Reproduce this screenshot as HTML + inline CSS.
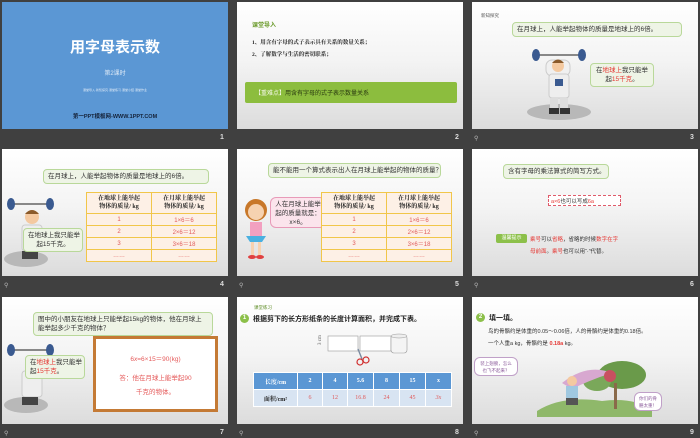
<!DOCTYPE html>
<html><head><meta charset="utf-8"><style>
*{margin:0;padding:0;box-sizing:border-box}
body{width:700px;height:438px;background:#404040;position:relative;overflow:hidden;font-family:"Liberation Sans","Noto Sans CJK SC",sans-serif}
.s{position:absolute;width:226px;height:127px;background:linear-gradient(#fff 0%,#f4f4f4 45%,#dcdcdc 100%);overflow:hidden}
.a{position:absolute}
.num{position:absolute;color:#ddd;font-size:7px;font-weight:bold}
.ic{position:absolute;color:#bbb;font-size:6px}
.bub{position:absolute;background:#eef4e6;border:1px solid #b9d89a;border-radius:4px;font-size:6.5px;color:#333;padding:2px 4px;line-height:9px;white-space:nowrap}
table{position:absolute;border-collapse:collapse;font-size:6px}
.t1 td{border:1px solid #f1c64a;background:#fdf0e6;text-align:center;color:#e05a5a;height:12px}
.t1 .h td{height:21px;color:#222;font-family:"Liberation Serif","Noto Serif CJK SC",serif;font-weight:bold;line-height:8px;font-size:6px}
.t2{table-layout:fixed}
.t2 td{border:1px solid #fff;text-align:center;height:17px;padding:0}
.red{color:#e53935}
</style></head><body>

<!-- slide 1 -->
<div class="s" style="left:2px;top:2px;background:#5b97d4">
<div class="a" style="left:0;width:226px;top:34px;text-align:center;color:#fff;font-size:15px;font-weight:bold">用字母表示数</div>
<div class="a" style="left:0;width:226px;top:66px;text-align:center;color:#dbe8f6;font-size:6px">第2课时</div>
<div class="a" style="left:0;width:226px;top:86px;text-align:center;color:#dbe8f6;font-size:3px">课堂导入·新知探究·课堂练习·课堂小结·课堂作业</div>
<div class="a" style="left:0;width:226px;top:110px;text-align:center;color:#15233a;font-size:5.5px;font-weight:bold">第一PPT模板网-WWW.1PPT.COM</div>
</div>
<div class="num" style="left:220px;top:134px">1</div>

<!-- slide 2 -->
<div class="s" style="left:237px;top:2px">
<div class="a" style="left:15px;top:18px;font-size:6px;color:#6a9a2a;font-weight:bold">课堂导入</div>
<div class="a" style="left:15px;top:36px;font-size:5.5px;color:#222;font-weight:bold;font-family:'Liberation Serif','Noto Serif CJK SC',serif">1、用含有字母的式子表示具有关系的数量关系；</div>
<div class="a" style="left:15px;top:48px;font-size:5.5px;color:#222;font-weight:bold;font-family:'Liberation Serif','Noto Serif CJK SC',serif">2、了解数学与生活的密切联系；</div>
<div class="a" style="left:8px;top:80px;width:212px;height:21px;background:#8cbd3e;border-radius:2px;font-size:6px;color:#2a3a10;padding:6px 10px"><span style="color:#f4f8e8">【重难点】</span>用含有字母的式子表示数量关系</div>
</div>
<div class="num" style="left:455px;top:134px">2</div>

<!-- slide 3 -->
<div class="s" style="left:472px;top:2px">
<div class="a" style="left:9px;top:11px;font-size:4.5px;color:#555">新知探究</div>
<div class="bub" style="left:40px;top:20px;width:170px">在月球上，人能举起物体的质量是地球上的6倍。</div>
<svg class="a" style="left:52px;top:44px" width="70" height="76">
<ellipse cx="35" cy="66" rx="32" ry="8" fill="#b8b8b8"/>
<rect x="12" y="8" width="46" height="2" fill="#888"/>
<ellipse cx="12" cy="9" rx="4" ry="6" fill="#3a5a90"/><ellipse cx="58" cy="9" rx="4" ry="6" fill="#3a5a90"/>
<rect x="22" y="14" width="24" height="16" rx="6" fill="#f0f0f0" stroke="#ccc"/>
<circle cx="34" cy="20" r="6" fill="#f4c9a0"/><path d="M28 17 Q34 10 40 17" fill="#8a5a2a"/>
<rect x="25" y="28" width="20" height="24" rx="3" fill="#eee" stroke="#ccc"/>
<rect x="31" y="33" width="8" height="7" fill="#3a5a90"/>
<rect x="26" y="52" width="8" height="12" fill="#ddd"/><rect x="36" y="52" width="8" height="12" fill="#ddd"/>
<rect x="25" y="62" width="10" height="6" fill="#333"/><rect x="36" y="62" width="10" height="6" fill="#333"/>
</svg>
<div class="bub" style="left:118px;top:61px;width:64px;text-align:center">在<span class="red">地球上</span>我只能举<br>起<span class="red">15千克</span>。</div>
</div>
<div class="ic" style="left:474px;top:135px">⚲</div>
<div class="num" style="left:690px;top:134px">3</div>

<!-- slide 4 -->
<div class="s" style="left:2px;top:149px">
<div class="bub" style="left:41px;top:20px;width:166px">在月球上，人能举起物体的质量是地球上的6倍。</div>
<svg class="a" style="left:2px;top:42px" width="52" height="80">
<ellipse cx="22" cy="68" rx="22" ry="8" fill="#b8b8b8"/>
<rect x="6" y="12" width="40" height="2" fill="#888"/>
<ellipse cx="7" cy="13" rx="4" ry="6" fill="#3a5a90"/><ellipse cx="46" cy="13" rx="4" ry="6" fill="#3a5a90"/>
<circle cx="28" cy="26" r="7" fill="#f4c9a0"/><path d="M21 23 Q28 15 35 23" fill="#8a5a2a"/>
<rect x="18" y="34" width="20" height="26" rx="3" fill="#eee" stroke="#ccc"/>
<rect x="18" y="60" width="16" height="8" fill="#444"/>
</svg>
<div class="bub" style="left:21px;top:79px;width:60px;text-align:center">在地球上我只能举<br>起15千克。</div>
<table class="t1" style="left:84px;top:43px;width:131px">
<tr class="h"><td>在地球上能举起<br>物体的质量/ kg</td><td>在月球上能举起<br>物体的质量/ kg</td></tr>
<tr><td>1</td><td>1×6＝6</td></tr><tr><td>2</td><td>2×6＝12</td></tr><tr><td>3</td><td>3×6＝18</td></tr><tr><td>……</td><td>……</td></tr></table>
</div>
<div class="ic" style="left:4px;top:282px">⚲</div>
<div class="num" style="left:220px;top:281px">4</div>

<!-- slide 5 -->
<div class="s" style="left:237px;top:149px">
<div class="bub" style="left:31px;top:14px;width:173px">能不能用一个算式表示出人在月球上能举起的物体的质量？</div>
<svg class="a" style="left:3px;top:47px" width="32" height="66">
<circle cx="16" cy="14" r="11" fill="#c8782a"/><circle cx="16" cy="16" r="8" fill="#f6d2b0"/>
<rect x="10" y="26" width="12" height="14" fill="#f2a0c0"/><path d="M6 40 L26 40 L22 46 L10 46Z" fill="#4ab0e0"/>
<rect x="11" y="46" width="3" height="14" fill="#f6d2b0"/><rect x="18" y="46" width="3" height="14" fill="#f6d2b0"/>
<ellipse cx="12" cy="61" rx="4" ry="2" fill="#e04040"/><ellipse cx="20" cy="61" rx="4" ry="2" fill="#e04040"/>
</svg>
<div class="bub" style="left:33px;top:48px;width:56px;height:31px;background:#fbe4ec;border-color:#e89ab8;text-align:center;border-radius:6px">人在月球上能举<br>起的质量就是：<br>x×6。</div>
<table class="t1" style="left:84px;top:43px;width:131px">
<tr class="h"><td>在地球上能举起<br>物体的质量/ kg</td><td>在月球上能举起<br>物体的质量/ kg</td></tr>
<tr><td>1</td><td>1×6＝6</td></tr><tr><td>2</td><td>2×6＝12</td></tr><tr><td>3</td><td>3×6＝18</td></tr><tr><td>……</td><td>……</td></tr></table>
</div>
<div class="ic" style="left:239px;top:282px">⚲</div>
<div class="num" style="left:455px;top:281px">5</div>

<!-- slide 6 -->
<div class="s" style="left:472px;top:149px">
<div class="bub" style="left:31px;top:15px;width:106px">含有字母的乘法算式的简写方式。</div>
<div class="a" style="left:76px;top:46px;width:73px;height:11px;border:1px dashed #e05a6a;background:#fff;font-size:5.5px;color:#333;padding:1px 2px;white-space:nowrap"><span class="red">a×6</span>也可以写成<span class="red">6a</span></div>
<div class="a" style="left:24px;top:85px;width:31px;height:9px;background:#8cc04a;border-radius:2px;font-size:5px;color:#fff;text-align:center;line-height:9px">温馨提示</div>
<div class="a" style="left:58px;top:85px;font-size:5.5px;color:#333;line-height:12px;white-space:nowrap"><span class="red">乘号</span>可以<span class="red">省略</span>，省略的时候<span class="red">数字在字</span><br><span class="red">母前面</span>。<span class="red">乘号</span>也可以用“·”代替。</div>
</div>
<div class="ic" style="left:474px;top:282px">⚲</div>
<div class="num" style="left:690px;top:281px">6</div>

<!-- slide 7 -->
<div class="s" style="left:2px;top:297px">
<div class="bub" style="left:31px;top:15px;width:180px;white-space:normal">图中的小朋友在地球上只能举起15kg的物体，他在月球上能举起多少千克的物体？</div>
<svg class="a" style="left:2px;top:40px" width="52" height="80">
<ellipse cx="22" cy="68" rx="22" ry="8" fill="#b8b8b8"/>
<rect x="6" y="12" width="40" height="2" fill="#888"/>
<ellipse cx="7" cy="13" rx="4" ry="6" fill="#3a5a90"/><ellipse cx="46" cy="13" rx="4" ry="6" fill="#3a5a90"/>
<circle cx="28" cy="26" r="7" fill="#f4c9a0"/><path d="M21 23 Q28 15 35 23" fill="#8a5a2a"/>
<rect x="18" y="34" width="20" height="26" rx="3" fill="#eee" stroke="#ccc"/>
<rect x="18" y="60" width="16" height="8" fill="#444"/>
</svg>
<div class="bub" style="left:23px;top:58px;width:60px">在<span class="red">地球上</span>我只能举<br>起<span class="red">15千克</span>。</div>
<div class="a" style="left:91px;top:39px;width:125px;height:76px;border:3px solid #c47a35;background:#fff;color:#e55a5a;font-size:6.5px;text-align:center">
<div style="margin-top:14px">6<i>x</i>=6×15＝90(kg)</div>
<div style="margin-top:9px;line-height:14px">答：他在月球上能举起90<br>千克的物体。</div></div>
</div>
<div class="ic" style="left:4px;top:430px">⚲</div>
<div class="num" style="left:220px;top:429px">7</div>

<!-- slide 8 -->
<div class="s" style="left:237px;top:297px">
<div class="a" style="left:17px;top:8px;font-size:4.5px;color:#5a8a20">课堂练习</div>
<div class="a" style="left:3px;top:17px;width:9px;height:9px;border-radius:50%;background:#8cc04a;color:#fff;font-size:6px;text-align:center;line-height:9px;font-weight:bold">1</div>
<div class="a" style="left:16px;top:17px;font-size:7px;font-weight:bold;color:#222">根据剪下的长方形纸条的长度计算面积，并完成下表。</div>
<svg class="a" style="left:80px;top:36px" width="100" height="36">
<text x="4" y="12" font-size="5" fill="#555" transform="rotate(-90 4 12)" font-family="Liberation Serif">3 cm</text>
<rect x="11" y="3" width="30" height="15" fill="#fff" stroke="#999" stroke-width=".6"/>
<rect x="43" y="3" width="31" height="15" fill="#fff" stroke="#999" stroke-width=".6"/>
<rect x="74" y="2" width="16" height="18" rx="3" fill="#f4f4f4" stroke="#999" stroke-width=".6"/>
<ellipse cx="82" cy="3" rx="8" ry="2" fill="#eee" stroke="#999" stroke-width=".5"/>
<path d="M41 16 L45 26" stroke="#7a8aa0" stroke-width="1.4"/>
<circle cx="43" cy="29" r="3" fill="none" stroke="#d03030" stroke-width="1.2"/><circle cx="49" cy="27" r="3" fill="none" stroke="#d03030" stroke-width="1.2"/>
</svg>
<table class="t2" style="left:16px;top:75px;width:198px;font-family:'Liberation Serif','Noto Serif CJK SC',serif">
<colgroup><col style="width:44px"><col style="width:25px"><col style="width:25px"><col style="width:26px"><col style="width:26px"><col style="width:26px"><col style="width:26px"></colgroup>
<tr style="background:#5b97d4;color:#fff;font-weight:bold"><td>长度/cm</td><td>2</td><td>4</td><td>5.6</td><td>8</td><td>15</td><td>x</td></tr>
<tr style="background:#d8e4f2;color:#e05a5a"><td style="color:#222;font-weight:bold">面积/cm²</td><td>6</td><td>12</td><td>16.8</td><td>24</td><td>45</td><td><i>3x</i></td></tr>
</table>
</div>
<div class="ic" style="left:239px;top:430px">⚲</div>
<div class="num" style="left:455px;top:429px">8</div>

<!-- slide 9 -->
<div class="s" style="left:472px;top:297px">
<div class="a" style="left:4px;top:16px;width:9px;height:9px;border-radius:50%;background:#8cc04a;color:#fff;font-size:6px;text-align:center;line-height:9px;font-weight:bold">2</div>
<div class="a" style="left:17px;top:16px;font-size:7px;font-weight:bold;color:#222">填一填。</div>
<div class="a" style="left:16px;top:29px;font-size:5.5px;color:#333;line-height:12px;white-space:nowrap">鸟的骨骼约是体重的0.05～0.06倍，人的骨骼约是体重的0.18倍。<br>一个人重a kg，骨骼约是 <b class="red">0.18a</b> kg。</div>
<svg class="a" style="left:30px;top:56px" width="160" height="70">
<path d="M35 58 Q60 42 100 48 Q130 44 150 56 L150 64 L35 64Z" fill="#8fb86a"/>
<ellipse cx="120" cy="22" rx="24" ry="14" fill="#6a9a4a"/><ellipse cx="95" cy="28" rx="14" ry="10" fill="#7aa85a"/>
<rect x="112" y="30" width="3" height="26" fill="#8a6a4a"/>
<path d="M60 30 Q85 10 110 20 Q90 26 70 36Z" fill="#d8a8d0"/>
<circle cx="70" cy="28" r="5" fill="#f4c9a0"/><rect x="64" y="33" width="12" height="12" fill="#a0c8e0"/><rect x="64" y="45" width="12" height="7" fill="#555"/>
<circle cx="108" cy="23" r="6" fill="#c85060"/>
</svg>
<div class="a" style="left:2px;top:60px;width:44px;height:19px;border:1px solid #c0a0c8;border-radius:6px;background:#fff;font-size:4.5px;color:#8a5a9a;text-align:center;line-height:7px;padding-top:2px">装上翅膀，怎么<br>也飞不起来？</div>
<div class="a" style="left:162px;top:95px;width:28px;height:19px;border:1px solid #c0a0c8;border-radius:6px;background:#fff;font-size:4.5px;color:#8a5a9a;text-align:center;line-height:7px;padding-top:2px">你们的骨<br>骼太重！</div>
</div>
<div class="ic" style="left:474px;top:430px">⚲</div>
<div class="num" style="left:690px;top:429px">9</div>
</body></html>
